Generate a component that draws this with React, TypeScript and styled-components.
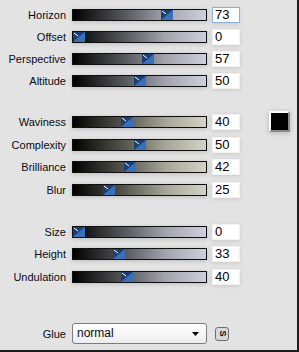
import React from "react";
import styled, { createGlobalStyle } from "styled-components";

const Global = createGlobalStyle`
  html, body { margin: 0; padding: 0; background: #e3e3e3; }
  * { box-sizing: border-box; }
`;

const Panel = styled.div`
  width: 299px;
  height: 352px;
  background: #e3e3e3;
  border-right: 2px solid #1c1c1c;
  border-bottom: 2px solid #1c1c1c;
  padding-top: 4px;
  font-family: "Liberation Sans", Arial, sans-serif;
  color: #0a0a14;
  display: flex;
  flex-direction: column;
`;

const Group = styled.div<{ $mt: number }>`
  display: flex;
  margin-top: ${(p) => p.$mt}px;
`;

const Rows = styled.div`
  display: flex;
  flex-direction: column;
`;

const Row = styled.div<{ $h: number }>`
  display: flex;
  align-items: center;
  height: ${(p) => p.$h}px;
`;

const Label = styled.div`
  width: 66px;
  margin-right: 6px;
  text-align: right;
  font-size: 11px;
  white-space: nowrap;
`;

const Track = styled.div<{ $tone: "blue" | "beige" }>`
  position: relative;
  width: 135px;
  height: 12px;
  border: 1px solid #101010;
  margin-right: 5px;
  background: ${(p) =>
    p.$tone === "blue"
      ? "linear-gradient(to right, #000 0%, #5a5b60 40%, #a3a4ad 70%, #cdcfdc 100%)"
      : "linear-gradient(to right, #000 0%, #5a5a52 40%, #a6a798 70%, #d2d3c4 100%)"};
  box-shadow: 0 1px 4px rgba(0, 0, 0, 0.18);
`;

const Thumb = styled.svg`
  position: absolute;
  top: 0;
  width: 12px;
  height: 10px;
  display: block;
`;

const ValueBox = styled.div<{ $focus?: boolean }>`
  width: 28px;
  height: 16px;
  background: #fff;
  border: 1px solid ${(p) => (p.$focus ? "#8db0dc" : "#f2f2f2")};
  box-shadow: 0 1px 4px rgba(0, 0, 0, 0.12);
  font-size: 13px;
  line-height: 14px;
  padding-left: 2px;
  color: #000;
`;

const Swatch = styled.div`
  width: 21px;
  height: 21px;
  margin-left: 29px;
  margin-top: 0px;
  background: #000;
  border-top: 2px solid #fafafa;
  border-left: 2px solid #fafafa;
  border-right: 2px solid #8a8a8a;
  border-bottom: 2px solid #8a8a8a;
  box-shadow: 0 1px 5px rgba(0, 0, 0, 0.2);
`;

const GlueRow = styled.div`
  display: flex;
  align-items: center;
  height: 22px;
  margin-top: 35px;
`;

const Select = styled.div`
  position: relative;
  width: 135px;
  height: 21px;
  border: 1px solid #7c7c7c;
  border-radius: 3px;
  background: linear-gradient(#ffffff, #ededed);
  font-size: 12px;
  line-height: 19px;
  padding-left: 4px;
  display: flex;
  align-items: center;
  justify-content: space-between;
  padding-right: 7px;
`;

const Arrow = styled.svg`
  width: 7px;
  height: 4px;
  display: block;
`;

const SButton = styled.div`
  width: 14px;
  height: 14px;
  margin-left: 8px;
  border: 1px solid #6e6e6e;
  border-radius: 3px;
  background: #d8d8d8;
  display: flex;
  align-items: center;
  justify-content: center;
  font-size: 9px;
  font-weight: bold;
  line-height: 1;
`;

const SGlyph = styled.span`
  display: inline-block;
  transform: rotate(90deg);
`;

type Item = { label: string; value: number; focus?: boolean };

const ThumbIcon = ({ value }: { value: number }) => (
  <Thumb
    viewBox="0 0 12 10"
    style={{ left: Math.round((121 * value) / 100) }}
  >
    <rect x="0" y="0" width="12" height="10" fill="#2c5a98" />
    <polygon points="0,0 12,0 0,10" fill="#1b3f73" />
    <polygon points="12,0 12,10 0,10" fill="#3a70b8" />
    <line x1="1" y1="1" x2="5" y2="4" stroke="#ffffff" strokeWidth="1" />
  </Thumb>
);

const SliderRows = ({
  items,
  tone,
  h,
}: {
  items: Item[];
  tone: "blue" | "beige";
  h: number;
}) => (
  <Rows>
    {items.map((it) => (
      <Row key={it.label} $h={h}>
        <Label>{it.label}</Label>
        <Track $tone={tone}>
          <ThumbIcon value={it.value} />
        </Track>
        <ValueBox $focus={it.focus}>{it.value}</ValueBox>
      </Row>
    ))}
  </Rows>
);

export default function App() {
  return (
    <>
      <Global />
      <Panel>
        <Group $mt={0}>
          <SliderRows
            tone="blue"
            h={22}
            items={[
              { label: "Horizon", value: 73, focus: true },
              { label: "Offset", value: 0 },
              { label: "Perspective", value: 57 },
              { label: "Altitude", value: 50 },
            ]}
          />
        </Group>
        <Group $mt={19}>
          <SliderRows
            tone="beige"
            h={22.6}
            items={[
              { label: "Waviness", value: 40 },
              { label: "Complexity", value: 50 },
              { label: "Brilliance", value: 42 },
              { label: "Blur", value: 25 },
            ]}
          />
          <Swatch />
        </Group>
        <Group $mt={19}>
          <SliderRows
            tone="blue"
            h={22.5}
            items={[
              { label: "Size", value: 0 },
              { label: "Height", value: 33 },
              { label: "Undulation", value: 40 },
            ]}
          />
        </Group>
        <GlueRow>
          <Label>Glue</Label>
          <Select>
            <span>normal</span>
            <Arrow viewBox="0 0 7 4">
              <polygon points="0,0 7,0 3.5,4" fill="#000" />
            </Arrow>
          </Select>
          <SButton>
            <SGlyph>S</SGlyph>
          </SButton>
        </GlueRow>
      </Panel>
    </>
  );
}
